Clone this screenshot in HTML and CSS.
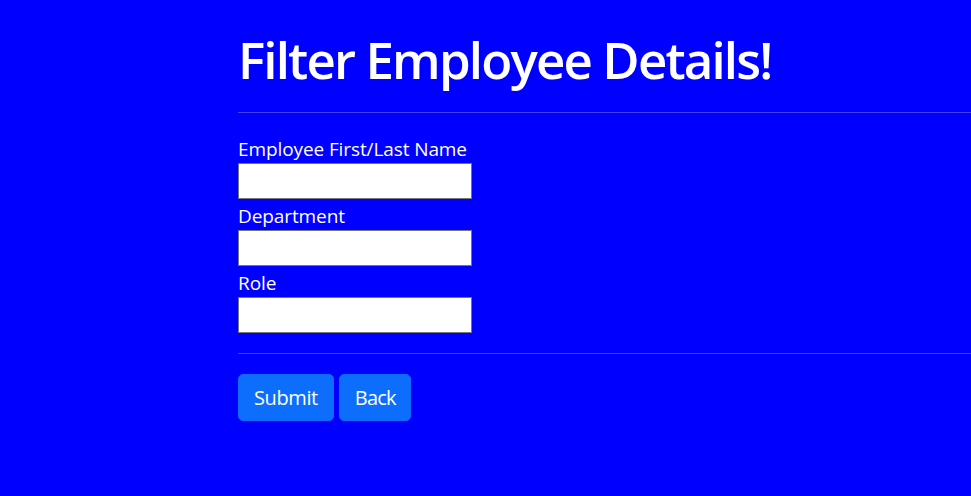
FILE: index.html
```html
<!DOCTYPE html>
<html lang="en">
<head>
<meta charset="utf-8">
<title>Filter Employee Details</title>
<link rel="stylesheet" href="styles.css">
</head>
<body>
<main class="page">
  <h1 class="title">Filter Employee Details!</h1>
  <hr class="rule">
  <form class="filter-form">
    <label class="field-label" for="name">Employee First/Last Name</label>
    <input class="field-input" id="name" type="text">
    <label class="field-label" for="dept">Department</label>
    <input class="field-input" id="dept" type="text">
    <label class="field-label" for="role">Role</label>
    <input class="field-input" id="role" type="text">
  </form>
  <hr class="rule rule-bottom">
  <div class="actions">
    <button class="btn" type="button">Submit</button>
    <button class="btn btn-back" type="button">Back</button>
  </div>
</main>
</body>
</html>
```

FILE: styles.css
```css
* { box-sizing: border-box; }
html, body { margin: 0; padding: 0; }
body {
  background: #0000ff;
  color: #ffffff;
  font-family: "Open Sans", "Noto Sans", sans-serif;
  font-size: 19px;
  width: 971px;
  height: 496px;
  overflow: hidden;
}
.page {
  padding-left: 238px;
  padding-top: 28px;
}
.title {
  margin: 0;
  font-size: 51px;
  font-weight: 600;
  line-height: 62px;
  letter-spacing: -1.85px;
}
.rule {
  margin: 22px 0 0 0;
  border: 0;
  border-top: 1px solid rgba(255, 255, 255, 0.25);
  height: 0;
}
.filter-form {
  display: flex;
  flex-direction: column;
  align-items: flex-start;
  padding-top: 24px;
}
.field-label {
  display: block;
  line-height: 24px;
  height: 24px;
  letter-spacing: -0.1px;
}
.field-input {
  display: block;
  width: 234px;
  height: 36px;
  margin: 2px 0 5px;
  border: 1px solid #767676;
  background: #fff;
  padding: 2px 4px;
  font: inherit;
}
.rule-bottom {
  margin-top: 15px;
}
.actions {
  display: flex;
  gap: 5px;
  margin-top: 20px;
}
.btn {
  background: #0d6efd;
  color: #fff;
  border: 1px solid #0d6efd;
  border-radius: 5px;
  font-family: inherit;
  font-size: 20px;
  line-height: 30px;
  padding: 8px 15px 8px 15px;
  height: 47px;
  cursor: pointer;
  letter-spacing: -0.4px;
}
.btn-back {
  padding: 8px 14px 8px 15px;
  letter-spacing: -0.8px;
}
```
